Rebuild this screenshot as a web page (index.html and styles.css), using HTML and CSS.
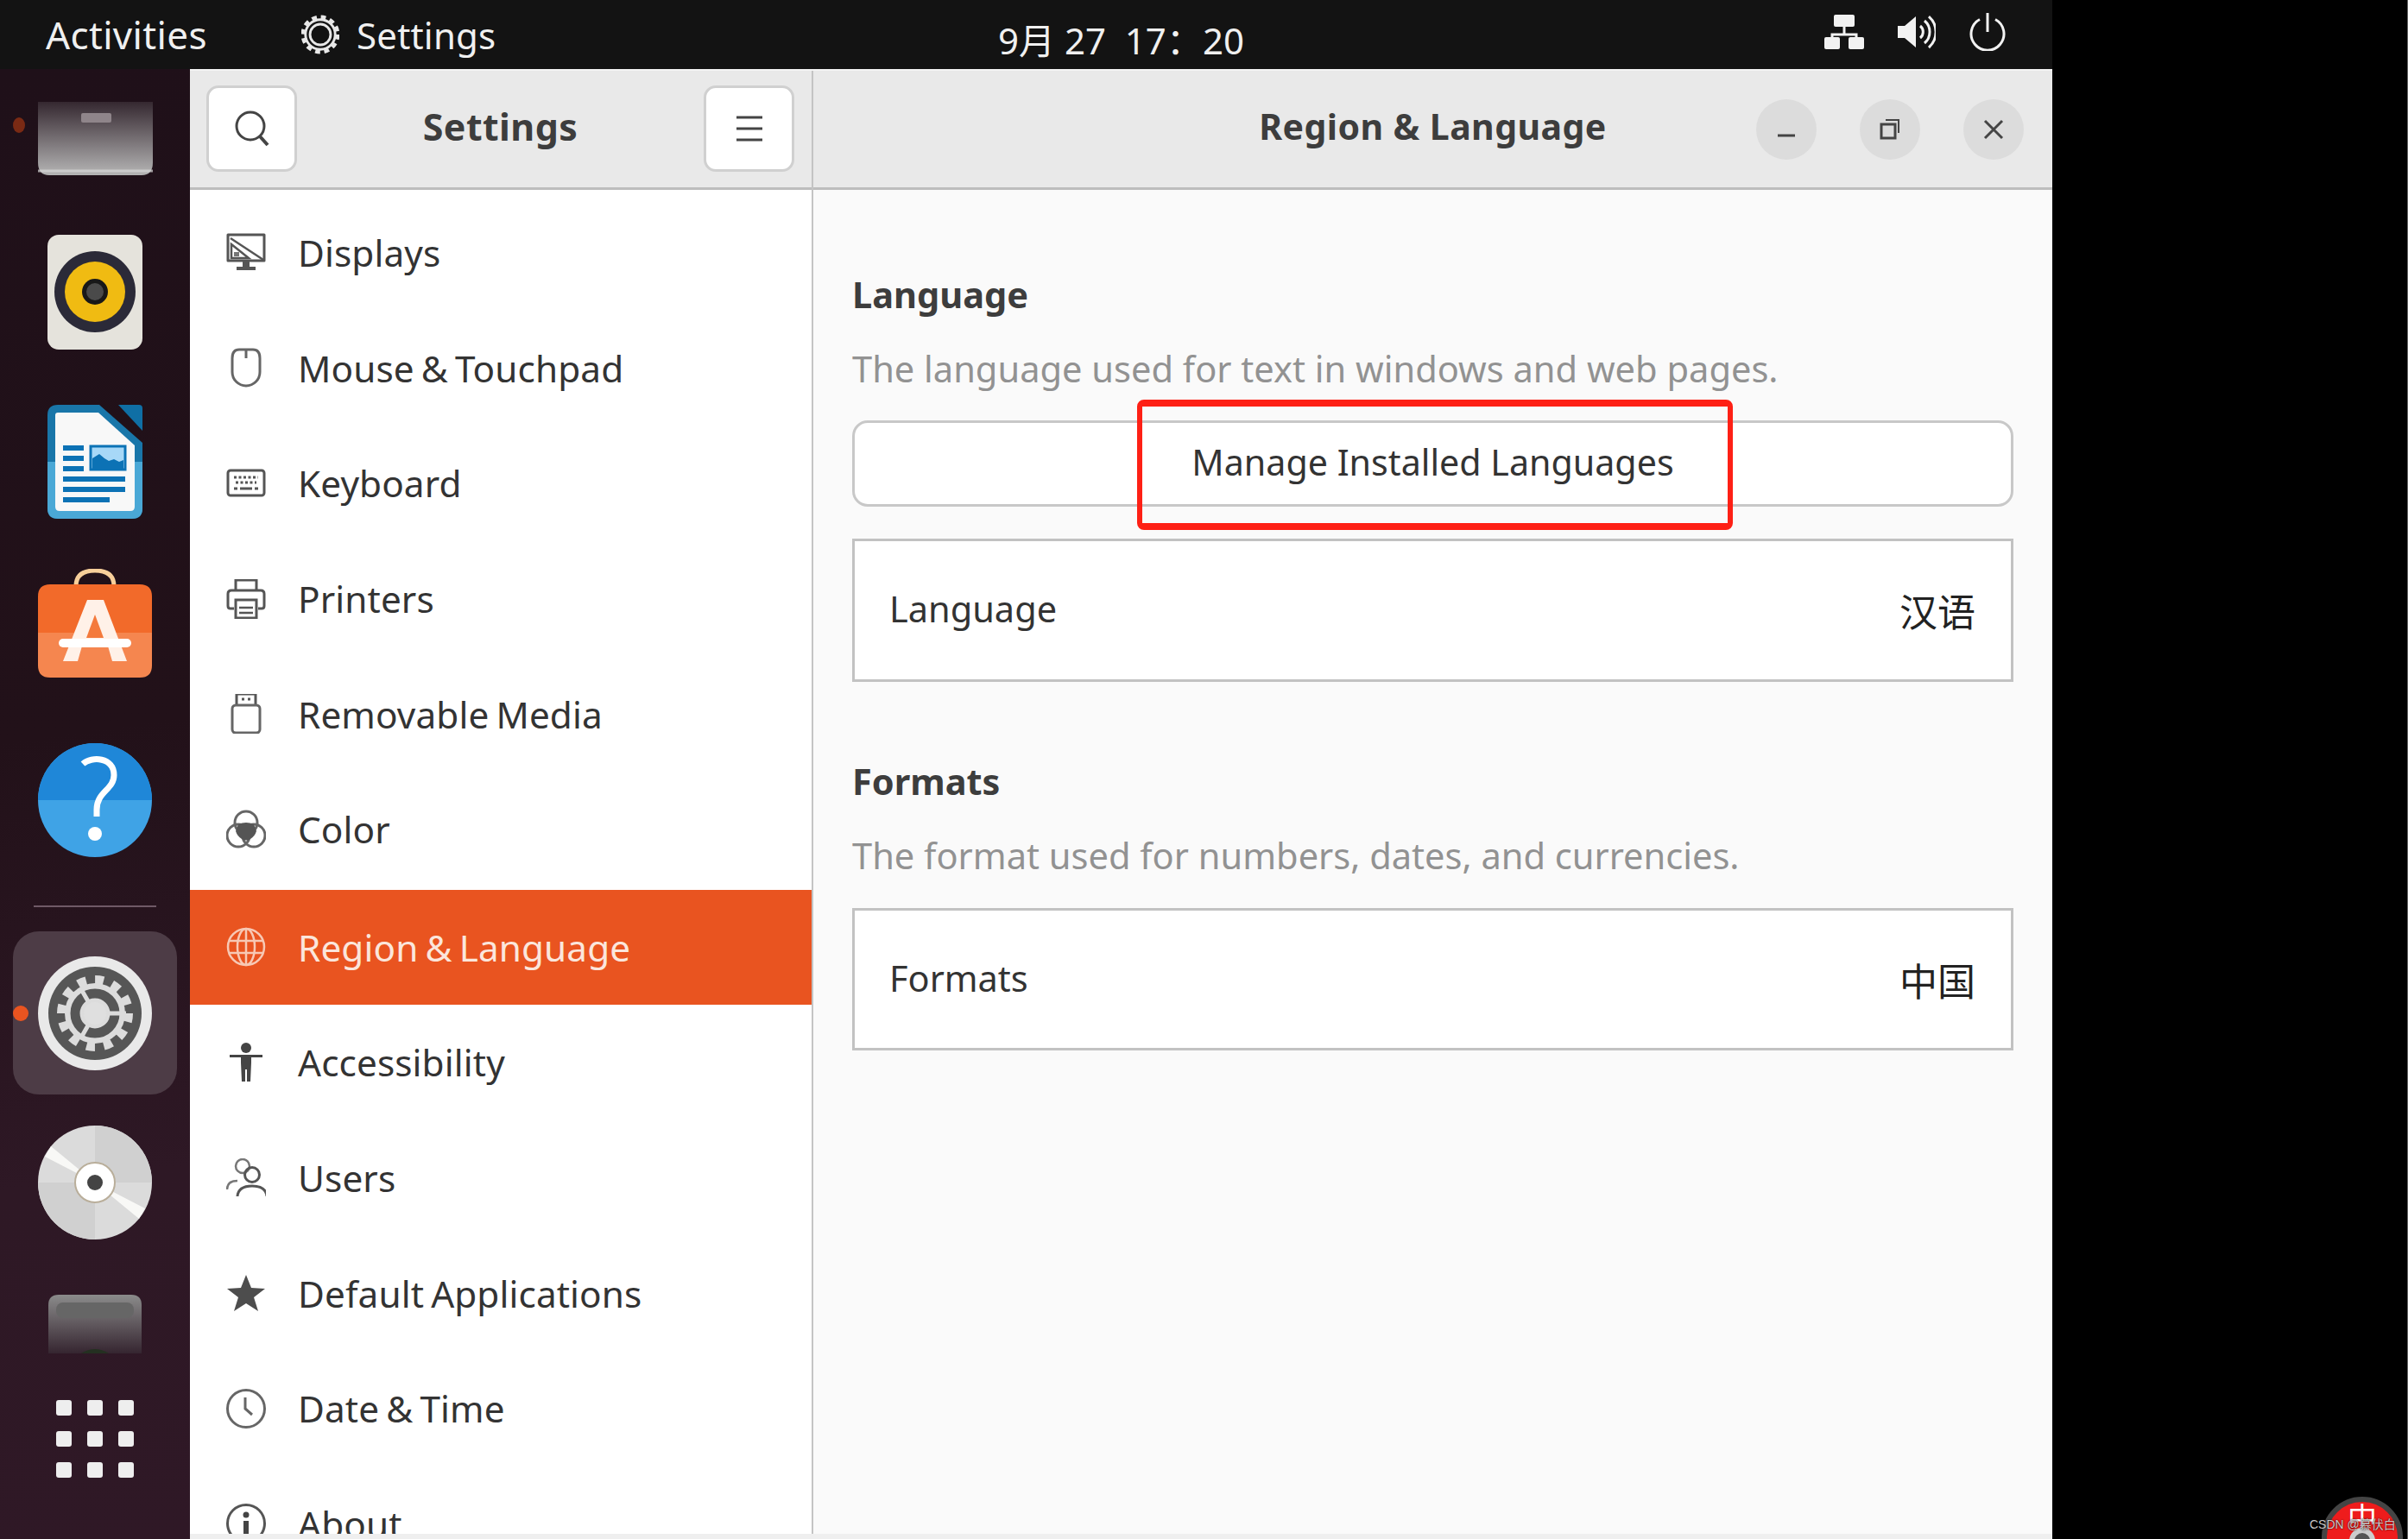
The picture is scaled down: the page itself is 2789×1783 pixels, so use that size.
FILE: index.html
```html
<!DOCTYPE html>
<html lang="en">
<head>
<meta charset="utf-8">
<title>Region &amp; Language</title>
<link rel="stylesheet" href="styles.css">
</head>
<body>
<div class="screen">
  <div class="desktop">
    <header class="topbar">
      <span class="activities">Activities</span>
      <span class="appmenu">
        <svg class="appgear" viewBox="0 0 46 48"><circle cx="23" cy="24" r="12.5" fill="none" stroke="#e8e8e8" stroke-width="3"/><circle cx="23" cy="24" r="18" fill="none" stroke="#e8e8e8" stroke-width="3"/><circle cx="23" cy="24" r="21" fill="none" stroke="#e8e8e8" stroke-width="5" stroke-dasharray="6 5"/></svg>
        <span>Settings</span>
      </span>
      <span class="clock">9月 27&nbsp; 17：20</span>
      <span class="tray">
        <svg class="tray-net" viewBox="0 0 46 40"><rect x="11" y="0" width="24" height="14" rx="2" fill="#f2f2f2"/><path d="M23 14v9M9 32v-9h28v9" fill="none" stroke="#f2f2f2" stroke-width="3"/><rect x="0" y="26" width="18" height="14" rx="2" fill="#f2f2f2"/><rect x="28" y="26" width="18" height="14" rx="2" fill="#f2f2f2"/></svg>
        <svg class="tray-vol" viewBox="0 0 44 40"><path d="M0 13h8L21 2v36L8 27H0z" fill="#f2f2f2"/><path d="M26 13a9 9 0 0 1 0 14M31 7a17 17 0 0 1 0 26M36 2a24 24 0 0 1 0 36" fill="none" stroke="#f2f2f2" stroke-width="3"/></svg>
        <svg class="tray-pow" viewBox="0 0 44 44"><path d="M13 7.5a19 19 0 1 0 18 0" fill="none" stroke="#f2f2f2" stroke-width="3"/><path d="M22 0v22" stroke="#f2f2f2" stroke-width="3"/></svg>
      </span>
    </header>
    <div class="workspace">
      <nav class="dock">
        <div class="dock-item di-files">
          <span class="run-dot run-dim"></span>
          <svg class="ic-drive" viewBox="0 0 133 85"><defs><linearGradient id="dg1" x1="0" y1="0" x2="0" y2="1"><stop offset="0" stop-color="#352830"/><stop offset="1" stop-color="#b5b5b5"/></linearGradient></defs><path d="M0 0h133v70q0 15-13 15H13Q0 85 0 70z" fill="url(#dg1)"/><rect x="50" y="13" width="35" height="11" rx="2" fill="#8f858a"/><path d="M0 80h133" stroke="#d9d9d9" stroke-width="3" opacity=".7"/></svg>
        </div>
        <div class="dock-item di-rhythm">
          <svg class="ic-rhythm" viewBox="0 0 110 133"><rect width="110" height="133" rx="13" fill="#e5e3dc"/><circle cx="55" cy="66" r="47" fill="#2b2a38"/><circle cx="55" cy="66" r="35" fill="#f0bb12"/><circle cx="55" cy="66" r="15" fill="#181818"/><circle cx="55" cy="66" r="10" fill="#4a4a4a"/></svg>
        </div>
        <div class="dock-item di-writer">
          <svg class="ic-writer" viewBox="0 0 110 132"><path d="M12 0h48l50 44v76q0 12-12 12H12Q0 132 0 120V12Q0 0 12 0z" fill="#1976a9"/><path d="M0 66h110v54q0 12-12 12H12Q0 132 0 120z" fill="#4aa8d6"/><path d="M12 9h47l42 38v71q0 5-5 5H14q-5 0-5-5V12q0-3 3-3z" fill="#f8f8f8"/><path d="M82 0h24q4 0 4 4v26z" fill="#0f6fa5"/><g fill="#0c72b5"><rect x="18" y="47" width="24" height="6"/><rect x="18" y="59" width="24" height="6"/><rect x="18" y="71" width="24" height="6"/><rect x="18" y="83" width="72" height="6"/><rect x="18" y="95" width="72" height="6"/><rect x="18" y="107" width="54" height="6"/></g><rect x="50" y="48" width="40" height="27" fill="#a7d8f7" stroke="#0c72b5" stroke-width="3"/><path d="M52 74V62l8-5 6 5 5 3 6-2 6 3 5-2v10z" fill="#0c72b5"/></svg>
        </div>
        <div class="dock-item di-store">
          <svg class="ic-store" viewBox="0 0 132 126"><path d="M44 22v-2q0-18 22-18t22 18v2" fill="none" stroke="#f7cf9a" stroke-width="5"/><path d="M14 18h104q14 0 14 14v42H0V32q0-14 14-14z" fill="#f26a2a"/><path d="M0 74h132v38q0 14-14 14H14q-14 0-14-14z" fill="#f5864f"/><path d="M57 36h19l27 71H86l-6-21H52l-6 21H29z" fill="#fff1e8"/><path d="M66 53l-10 27h20z" fill="#f47a3c"/><rect x="24" y="81" width="84" height="10" rx="5" fill="#fff"/></svg>
        </div>
        <div class="dock-item di-help">
          <svg class="ic-help" viewBox="0 0 132 132"><circle cx="66" cy="66" r="66" fill="#3fa3e6"/><path d="M0 66a66 66 0 0 1 132 0z" fill="#1f87d8"/><path d="M52 24c10-9 36-8 36 13 0 17-20 19-20 40v8" fill="none" stroke="#fff" stroke-width="7"/><circle cx="66" cy="105" r="8" fill="#fff"/></svg>
        </div>
        <div class="dock-sep"></div>
        <div class="dock-tile">
          <span class="run-dot"></span>
          <svg class="ic-settings" viewBox="0 0 132 132"><circle cx="66" cy="66" r="66" fill="#e9e9e9"/><circle cx="66" cy="66" r="54" fill="#565656"/><circle cx="66" cy="66" r="39" fill="none" stroke="#dcdcdc" stroke-width="10" stroke-dasharray="10 10.4"/><circle cx="66" cy="66" r="35" fill="#dcdcdc"/><circle cx="66" cy="66" r="23" fill="none" stroke="#565656" stroke-width="11"/><path d="M66 66h36M66 66L50 38M66 66L50 94" stroke="#dcdcdc" stroke-width="5"/><circle cx="66" cy="66" r="13" fill="#dfdfdf"/></svg>
        </div>
        <div class="dock-item di-disc">
          <svg class="ic-disc" viewBox="0 0 132 132"><circle cx="66" cy="66" r="66" fill="#dbdbdb"/><path d="M66 0a66 66 0 0 1 66 66H66z" fill="#d0d0d0"/><path d="M66 132a66 66 0 0 1-66-66h66z" fill="#d0d0d0"/><path d="M66 66L15 24 8 36zM66 66l51 42 7-12z" fill="#f8f8f6"/><circle cx="66" cy="66" r="23" fill="#fff" stroke="#b9ae9a" stroke-width="2"/><circle cx="66" cy="66" r="9" fill="#444"/></svg>
        </div>
        <div class="dock-item di-drive2">
          <svg class="ic-drive2" viewBox="0 0 108 68"><defs><linearGradient id="dg2" x1="0" y1="0" x2="0" y2="1"><stop offset="0" stop-color="#8b8b8b"/><stop offset="1" stop-color="#352530"/></linearGradient></defs><path d="M12 0h84q12 0 12 12v56H0V12Q0 0 12 0z" fill="url(#dg2)"/><rect x="9" y="9" width="90" height="18" rx="8" fill="#666"/><path d="M38 68q16-10 32 0z" fill="#243021"/></svg>
        </div>
        <div class="dock-grid">
          <i></i><i></i><i></i><i></i><i></i><i></i><i></i><i></i><i></i>
        </div>
      </nav>
      <main class="window">
        <aside class="side">
          <div class="headerbar side-head">
            <button class="hbtn">
              <svg class="hicon" viewBox="0 0 46 46"><circle cx="21" cy="20" r="16" fill="none" stroke="#444" stroke-width="3"/><path d="M32 32l9 10" stroke="#444" stroke-width="4"/></svg>
            </button>
            <span class="htitle side-title">Settings</span>
            <button class="hbtn">
              <svg class="hicon" viewBox="0 0 46 46"><path d="M8 10h30M8 23h30M8 36h30" stroke="#444" stroke-width="3"/></svg>
            </button>
          </div>
          <ul class="navlist">
            <li class="navrow"><svg class="navicon" viewBox="0 0 46 46"><path d="M2 2h42v30H2z" fill="none" stroke="#555" stroke-width="3" stroke-linejoin="round"/><path d="M5 6l38 25M6 13l20 16H6z" fill="none" stroke="#555" stroke-width="2.5"/><path d="M9 22h6v5H9z" fill="#777"/><path d="M19 33h8v6h7v4H12v-4h7z" fill="#555"/></svg><span>Displays</span></li>
            <li class="navrow"><svg class="navicon" viewBox="0 0 46 46"><path d="M15 2h16q8 0 8 10v16a16 16 0 0 1-32 0V12Q7 2 15 2z" fill="none" stroke="#666" stroke-width="3"/><path d="M23 2v10" stroke="#666" stroke-width="3"/></svg><span>Mouse &amp; Touchpad</span></li>
            <li class="navrow"><svg class="navicon" viewBox="0 0 46 46"><rect x="2" y="8" width="42" height="29" rx="3" fill="none" stroke="#555" stroke-width="3"/><path d="M9 16h28M11 22h24" stroke="#555" stroke-width="3" stroke-dasharray="3 2.5"/><path d="M9 29h4M16 29h14M33 29h4" stroke="#555" stroke-width="3"/></svg><span>Keyboard</span></li>
            <li class="navrow"><svg class="navicon" viewBox="0 0 46 46"><path d="M11 13V1h24v12" fill="none" stroke="#555" stroke-width="3"/><path d="M9 34H5q-3 0-3-3V17q0-4 4-4h34q4 0 4 4v14q0 3-3 3h-4" fill="none" stroke="#555" stroke-width="3"/><path d="M11 24h24v21H11z" fill="none" stroke="#555" stroke-width="3"/><path d="M15 33h16M15 39h16" stroke="#555" stroke-width="2.5"/></svg><span>Printers</span></li>
            <li class="navrow"><svg class="navicon" viewBox="0 0 46 46"><path d="M12 12V0h22v12" fill="none" stroke="#555" stroke-width="3"/><path d="M18 6h3M25 6h3" stroke="#555" stroke-width="3"/><rect x="7" y="13" width="32" height="32" rx="4" fill="none" stroke="#666" stroke-width="3"/></svg><span>Removable Media</span></li>
            <li class="navrow"><svg class="navicon" viewBox="0 0 46 46"><circle cx="23" cy="15" r="13" fill="none" stroke="#666" stroke-width="3"/><circle cx="14" cy="30" r="13" fill="none" stroke="#666" stroke-width="3"/><circle cx="32" cy="30" r="13" fill="none" stroke="#666" stroke-width="3"/><path d="M14 17q9-4 18 0l3 8q-2 6-7 9-5 3-10 0-5-3-7-9z" fill="#555"/></svg><span>Color</span></li>
            <li class="navrow navrow-active"><svg class="navicon" viewBox="0 0 46 46"><g fill="none" stroke="#f7c8b4" stroke-width="2.5"><circle cx="23" cy="23" r="21"/><ellipse cx="23" cy="23" rx="10" ry="21"/><path d="M3 16h40M3 30h40M23 2v42"/></g></svg><span>Region &amp; Language</span></li>
            <li class="navrow"><svg class="navicon" viewBox="0 0 46 46"><circle cx="23" cy="6" r="6" fill="#444"/><path d="M4 14h38v3H29v6l-1 22h-4V31h-2v14h-4l-1-22v-6H4z" fill="#444"/></svg><span>Accessibility</span></li>
            <li class="navrow"><svg class="navicon" viewBox="0 0 46 46"><g fill="none" stroke="#777" stroke-width="2.5"><circle cx="19" cy="9" r="8"/><path d="M1 36q0-10 12-10"/></g><g fill="none" stroke="#555" stroke-width="3"><circle cx="30" cy="19" r="8.5"/><path d="M13 44q1-12 17-12t17 12"/></g></svg><span>Users</span></li>
            <li class="navrow"><svg class="navicon" viewBox="0 0 46 46"><path d="M23 2l6 15 16 1-13 10 5 16-14-9-14 9 5-16L1 18l16-1z" fill="#4d4d4d"/></svg><span>Default Applications</span></li>
            <li class="navrow"><svg class="navicon" viewBox="0 0 46 46"><circle cx="23" cy="23" r="21.5" fill="none" stroke="#666" stroke-width="3"/><path d="M22 10v13l8 7" fill="none" stroke="#666" stroke-width="3"/></svg><span>Date &amp; Time</span></li>
            <li class="navrow"><svg class="navicon" viewBox="0 0 46 46"><circle cx="23" cy="23" r="21.5" fill="none" stroke="#555" stroke-width="3"/><circle cx="23" cy="13" r="3.5" fill="#444"/><path d="M20 20h6v16h-6z" fill="#444"/></svg><span>About</span></li>
          </ul>
        </aside>
        <section class="panel">
          <div class="headerbar panel-head">
            <span class="htitle panel-title">Region &amp; Language</span>
            <span class="wctl">
              <span class="wbtn"><svg class="wicon" viewBox="0 0 30 30"><path d="M5 22h20" stroke="#444" stroke-width="3"/></svg></span>
              <span class="wbtn"><svg class="wicon" viewBox="0 0 30 30"><rect x="5" y="9" width="16" height="16" fill="none" stroke="#444" stroke-width="3"/><path d="M10 4h15v15" fill="none" stroke="#444" stroke-width="2"/></svg></span>
              <span class="wbtn"><svg class="wicon" viewBox="0 0 30 30"><path d="M5 5l20 20M25 5L5 25" stroke="#444" stroke-width="3"/></svg></span>
            </span>
          </div>
          <div class="content">
            <h2 class="sec-title">Language</h2>
            <p class="sec-desc">The language used for text in windows and web pages.</p>
            <div class="manage"><span class="lift">Manage Installed Languages</span></div>
            <div class="valuerow valuerow-lang"><span class="lift">Language</span><span class="cjk">汉语</span></div>
            <h2 class="sec-title sec-formats">Formats</h2>
            <p class="sec-desc">The format used for numbers, dates, and currencies.</p>
            <div class="valuerow"><span class="lift">Formats</span><span class="cjk">中国</span></div>
          </div>
        </section>
      </main>
    </div>
  </div>
  <div class="redbox"></div>
  <div class="badge"><span class="badge-char">中</span><span class="badge-hub"></span></div>
  <div class="watermark">CSDN @慕伏白</div>
</div>
</body>
</html>
```
FILE: styles.css
```css
* { box-sizing: border-box; }
html, body { margin: 0; padding: 0; background: #000; }
body { font-family: "Noto Sans", "Noto Sans CJK SC", sans-serif; }
.screen { position: relative; display: flex; width: 2789px; height: 1783px; overflow: hidden; background: #000; border-right: 1px solid #666; }
.desktop { display: flex; flex-direction: column; width: 2377px; height: 100%; }

/* top bar */
.topbar { display: flex; align-items: center; flex: 0 0 80px; padding-left: 53px; background: #131313; color: #f0f0f0; font-size: 42px; letter-spacing: 0.2px; }
.activities { width: 296px; font-size: 44px; letter-spacing: 0.35px; }
.appmenu { display: flex; align-items: center; gap: 20px; width: 807px; }
.appgear { width: 44px; height: 46px; }
.clock { padding-top: 8px; font-size: 42px; letter-spacing: 0; white-space: nowrap; }
.tray { display: flex; align-items: center; margin-left: auto; margin-right: 53px; margin-bottom: 6px; }
.tray-net { width: 46px; height: 40px; margin-right: 39px; }
.tray-vol { width: 44px; height: 40px; margin-right: 38px; }
.tray-pow { width: 44px; height: 44px; }

/* dock */
.workspace { display: flex; flex: 1; min-height: 0; }
.dock { display: flex; flex-direction: column; align-items: center; flex: 0 0 220px; padding-top: 38px; background: linear-gradient(172deg, #1f1019 0%, #221119 45%, #2e1825 75%, #2f1826 100%); }
.dock-item { position: relative; display: flex; justify-content: center; line-height: 0; }
.dock svg { display: block; }
.di-files { height: 85px; width: 220px; }
.di-rhythm { margin-top: 69px; }
.di-writer { margin-top: 64px; }
.di-store { margin-top: 58px; }
.di-help { margin-top: 76px; }
.di-disc { margin-top: 36px; }
.di-drive2 { margin-top: 64px; }
.ic-drive { width: 133px; height: 85px; }
.ic-rhythm { width: 110px; height: 133px; }
.ic-writer { width: 110px; height: 132px; }
.ic-store { width: 132px; height: 126px; }
.ic-help, .ic-settings, .ic-disc { width: 132px; height: 132px; }
.ic-drive2 { width: 108px; height: 68px; }
.run-dot { position: absolute; left: 15px; top: 50%; width: 18px; height: 18px; margin-top: -9px; border-radius: 50%; background: #e95420; }
.run-dim { left: 15px; top: 18px; width: 14px; margin-top: 0; background: #7a2a14; }
.dock-sep { width: 142px; height: 2px; margin-top: 56px; background: #6f5a66; }
.dock-tile { position: relative; display: flex; align-items: center; justify-content: center; width: 190px; height: 189px; margin-top: 28px; border-radius: 30px; background: #4d3c46; }
.dock-tile .run-dot { left: 0; }
.dock-grid { display: grid; grid-template-columns: repeat(3, 18px); grid-auto-rows: 18px; gap: 18px; margin-top: 54px; }
.dock-grid i { border-radius: 3px; background: #eeeeee; }

/* window */
.window { display: flex; flex: 1; min-width: 0; border-top: 2px solid #f4f4f4; border-bottom: 6px solid #efefef; background: #fff; }
.side { display: flex; flex-direction: column; flex: 0 0 720px; overflow: hidden; }
.panel { display: flex; flex-direction: column; flex: 1; min-width: 0; border-left: 2px solid #c4c4c4; background: #fafafa; }
.headerbar { display: flex; align-items: center; flex: 0 0 138px; padding-bottom: 3px; background: #e9e9e9; border-bottom: 3px solid #bdbdbd; }
.side-head { justify-content: space-between; padding: 0 20px 2px 19px; }
.hbtn { display: flex; align-items: center; justify-content: center; width: 105px; height: 100px; padding: 0; border: 3px solid #d0d0d0; border-radius: 14px; background: #fff; }
.hicon { width: 46px; height: 46px; }
.htitle { position: relative; top: -2px; color: #3d3d3d; font-size: 41px; font-weight: 700; letter-spacing: 0.4px; }
.side-title { font-size: 43px; }
.panel-head { position: relative; justify-content: center; }
.wctl { position: absolute; right: 33px; top: 33px; display: flex; gap: 50px; }
.wbtn { display: flex; align-items: center; justify-content: center; width: 70px; height: 70px; border-radius: 50%; background: #dcdcdc; }
.wicon { width: 30px; height: 30px; }

.navlist { flex: 1; margin: 0; padding: 6px 0 0; list-style: none; background: #fff; }
.navrow { display: flex; align-items: center; gap: 37px; height: 133.6px; padding-left: 42px; color: #333; font-size: 42.3px; letter-spacing: 0.1px; word-spacing: -3px; white-space: nowrap; }
.navrow-active { margin-top: 3px; background: #e95420; color: #fbe6dc; }
.navicon { flex: 0 0 46px; width: 46px; height: 46px; }

/* content */
.content { flex: 1; padding: 96px 45px 0 45px; }
.sec-title { margin: 0; color: #3d3d3d; font-size: 41.5px; font-weight: 700; line-height: 50px; }
.sec-desc { margin: 36px 0 0; color: #929292; font-size: 41.6px; line-height: 50px; white-space: nowrap; }
.sec-formats { margin-top: 90px; }
.manage { display: flex; align-items: center; justify-content: center; height: 100px; margin-top: 35px; border: 3px solid #c8c8c8; border-radius: 18px; background: #fff; color: #333; font-size: 41.2px; }
.valuerow { display: flex; align-items: center; justify-content: space-between; height: 165px; margin-top: 36px; padding: 0 41px 0 40px; border: 3px solid #c2c2c2; background: #fff; color: #333; font-size: 41.5px; }
.valuerow-lang { height: 166px; margin-top: 37px; }
.lift { position: relative; top: -2px; }
.cjk { font-family: "Noto Sans CJK SC", sans-serif; font-size: 44px; color: #222; }

/* overlays */
.redbox { position: absolute; left: 1317px; top: 463px; width: 690px; height: 151px; border: solid #fe2015; border-width: 8px 6px; border-radius: 8px; }
.badge { position: absolute; left: 2689px; top: 1734px; width: 94px; height: 94px; border: 6px solid #444; border-radius: 50%; background: #ee1c1c; text-align: center; overflow: hidden; }
.badge-char { display: block; color: #fff; font-family: "Noto Sans CJK SC", sans-serif; font-size: 34px; line-height: 34px; }
.badge-hub { position: absolute; left: 26px; top: 30px; width: 30px; height: 30px; border: 6px solid #ccc; border-radius: 50%; background: #555; }
.watermark { position: absolute; left: 2675px; top: 1757px; color: #c8c8c8; font-family: "Liberation Sans", "Noto Sans CJK SC", sans-serif; font-size: 14px; line-height: 18px; white-space: nowrap; text-shadow: 0 0 2px #000; }
```
